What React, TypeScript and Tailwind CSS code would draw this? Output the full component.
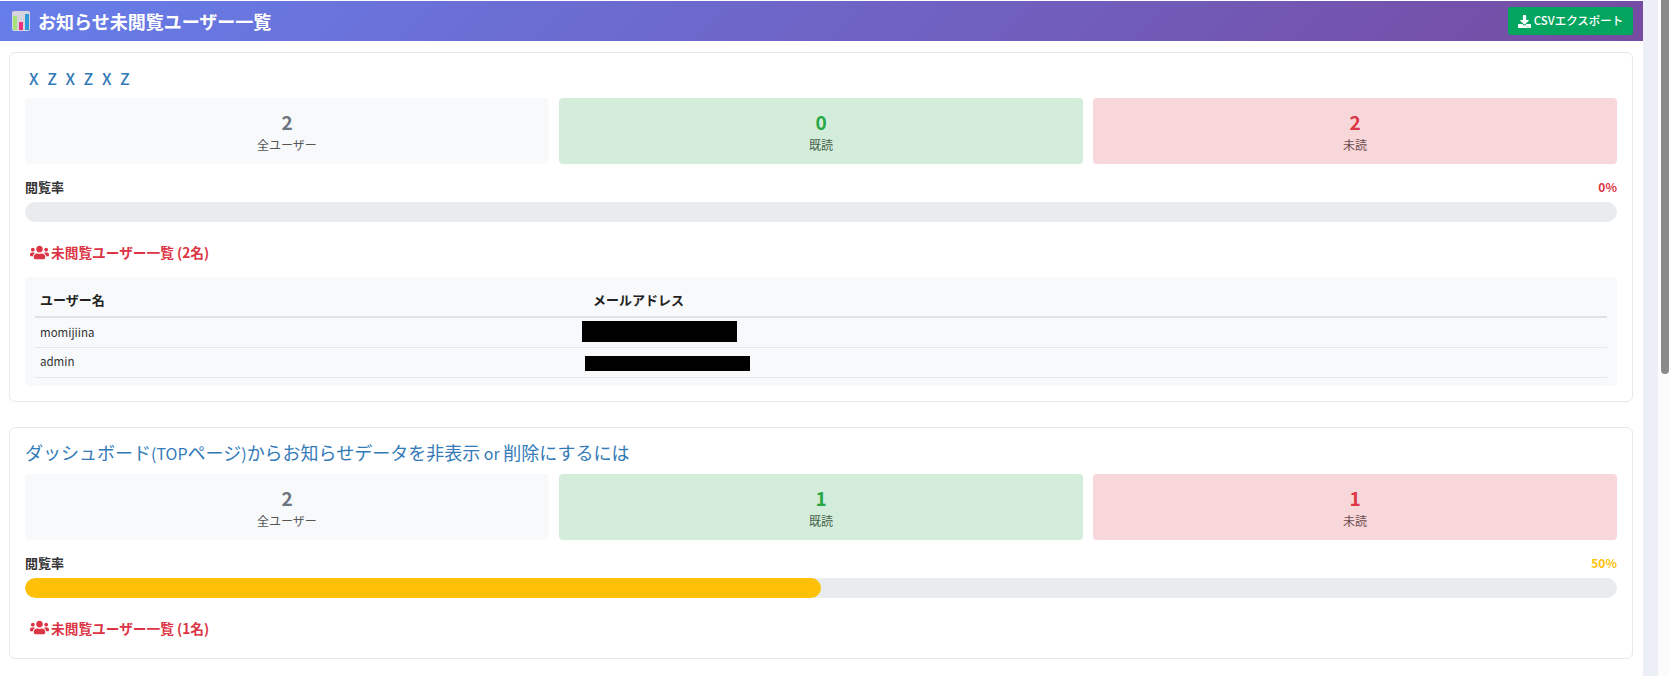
import type { ReactNode } from 'react';
import { FaDownload, FaUsers } from 'react-icons/fa';

type StatProps = {
  value: number;
  label: string;
  boxClass: string;
  valueClass: string;
  labelClass: string;
};

function Stat({ value, label, boxClass, valueClass, labelClass }: StatProps) {
  return (
    <div className={`flex h-[66px] flex-col items-center rounded-[4px] pt-[10px] ${boxClass}`}>
      <div className={`text-[19px] leading-[27px] font-bold ${valueClass}`}>{value}</div>
      <div className={`mt-[1px] text-[12px] leading-[18px] ${labelClass}`}>{label}</div>
    </div>
  );
}

function BarChartIcon() {
  return (
    <svg width="18" height="20" viewBox="0 0 18 20" className="shrink-0">
      <rect x="0" y="0" width="18" height="20" rx="2" fill="#d8d4dc" />
      <rect x="1" y="5" width="4" height="14" fill="#a5e07a" />
      <rect x="7" y="11" width="4" height="8" fill="#ec2f7e" />
      <rect x="13" y="3" width="4" height="16" fill="#2a9bd8" />
    </svg>
  );
}

type UnreadUser = {
  name: string;
  maskClass: string;
};

type NoticeCardProps = {
  title: ReactNode;
  titleClass: string;
  total: number;
  read: number;
  unread: number;
  rate: number;
  rateClass: string;
  barClass: string;
  users?: UnreadUser[];
};

function NoticeCard({ title, titleClass, total, read, unread, rate, rateClass, barClass, users }: NoticeCardProps) {
  return (
    <section className={`rounded-[6px] border border-[#e6e8ec] bg-white px-[15px] pt-[14px] ${users ? 'pb-[15px]' : 'pb-[20px]'}`}>
      <h2 className={`text-[#337ab7] ${titleClass}`}>{title}</h2>
      <div className="mt-[9px] grid grid-cols-3 gap-[10px]">
        <Stat value={total} label="全ユーザー" boxClass="bg-[#f8f9fa]" valueClass="text-[#6c757d]" labelClass="text-[#555]" />
        <Stat value={read} label="既読" boxClass="bg-[#d4edda]" valueClass="text-[#28a745]" labelClass="text-[#44604a]" />
        <Stat value={unread} label="未読" boxClass="bg-[#f8d7da]" valueClass="text-[#dc3545]" labelClass="text-[#6b4a4c]" />
      </div>
      <div className="mt-[14px] flex items-center justify-between text-[13px] leading-[18px] font-bold">
        <span className="text-[#333]">閲覧率</span>
        <span className={`text-[12px] ${rateClass}`}>{rate}%</span>
      </div>
      <div className="mt-[6px] h-[20px] overflow-hidden rounded-full bg-[#e9ecef]">
        <div className={`h-full rounded-full ${barClass}`} style={{ width: `${rate}%` }} />
      </div>
      <div className="mt-[20px] flex items-center gap-[2px] pl-[5px] text-[13.7px] leading-[20px] font-bold text-[#dc3545]">
        <FaUsers size={19} />
        <span>未閲覧ユーザー一覧 ({users ? users.length : 1}名)</span>
      </div>
      {users ? (
        <div className="mt-[15px] rounded-[4px] bg-[#f8f9fa] px-[10px] pt-[10px] pb-[8px]">
          <table className="w-full table-fixed border-collapse text-[11.5px]">
            <thead>
              <tr className="border-b-2 border-[#dee2e6] text-left text-[13px] text-[#222]">
                <th className="h-[30px] w-[553px] pb-[4px] pl-[5px] font-bold">ユーザー名</th>
                <th className="h-[30px] pb-[4px] pl-[5px] font-bold">メールアドレス</th>
              </tr>
            </thead>
            <tbody>
              {users.map((user) => (
                <tr key={user.name} className="h-[30px] border-b border-[#e3e6ea] text-[#333]">
                  <td className="pl-[5px]">{user.name}</td>
                  <td>
                    <div className={`bg-black ${user.maskClass}`} />
                  </td>
                </tr>
              ))}
            </tbody>
          </table>
        </div>
      ) : null}
    </section>
  );
}

export default function App() {
  return (
    <div
      className="flex h-[676px] overflow-hidden bg-white"
      style={{ fontFamily: '"Noto Sans CJK JP", "Noto Sans", sans-serif' }}
    >
      <main className="w-[1643px] shrink-0 pt-px">
        <header className="flex h-[40px] items-center justify-between bg-[linear-gradient(135deg,#667eea_0%,#764ba2_100%)] pr-[10px] pl-[12px]">
          <div className="flex items-center gap-[8px] text-[18px] font-bold text-white">
            <BarChartIcon />
            <span>お知らせ未閲覧ユーザー一覧</span>
          </div>
          <button className="flex h-[28px] w-[125px] items-center justify-center gap-[3px] rounded-[3px] bg-[#04a55e] text-[11.5px] font-medium text-white">
            <FaDownload size={13} />
            CSVエクスポート
          </button>
        </header>
        <div className="flex flex-col gap-[25px] pt-[11px] pr-[10px] pl-[9px]">
          <NoticeCard
            title="X Z X Z X Z"
            titleClass="pl-[4px] text-[16px] leading-[22px] font-medium [word-spacing:5px]"
            total={2}
            read={0}
            unread={2}
            rate={0}
            rateClass="text-[#dc3545]"
            barClass="bg-[#dc3545]"
            users={[
              { name: 'momijiina', maskClass: 'ml-[-6px] mb-[2px] h-[21px] w-[155px]' },
              { name: 'admin', maskClass: 'ml-[-3px] mt-[3px] h-[15px] w-[165px]' },
            ]}
          />
          <NoticeCard
            title={
              <>
                ダッシュボード<span className="text-[16px]">(TOP</span>ページ<span className="text-[16px]">)</span>からお知らせデータを非表示<span className="text-[16px]"> or </span>削除にするには
              </>
            }
            titleClass="pb-[2px] text-[18px] leading-[20px] font-normal"
            total={2}
            read={1}
            unread={1}
            rate={50}
            rateClass="text-[#ffc107]"
            barClass="bg-[#ffc107]"
          />
        </div>
      </main>
      <div className="w-[15px] shrink-0 bg-[#eceff5]" />
      <div className="flex w-[11px] shrink-0 justify-end bg-[#fcfcfc]">
        <div className="h-[374px] w-[8px] rounded-b-[4px] bg-[#8a8a8a]" />
      </div>
    </div>
  );
}
